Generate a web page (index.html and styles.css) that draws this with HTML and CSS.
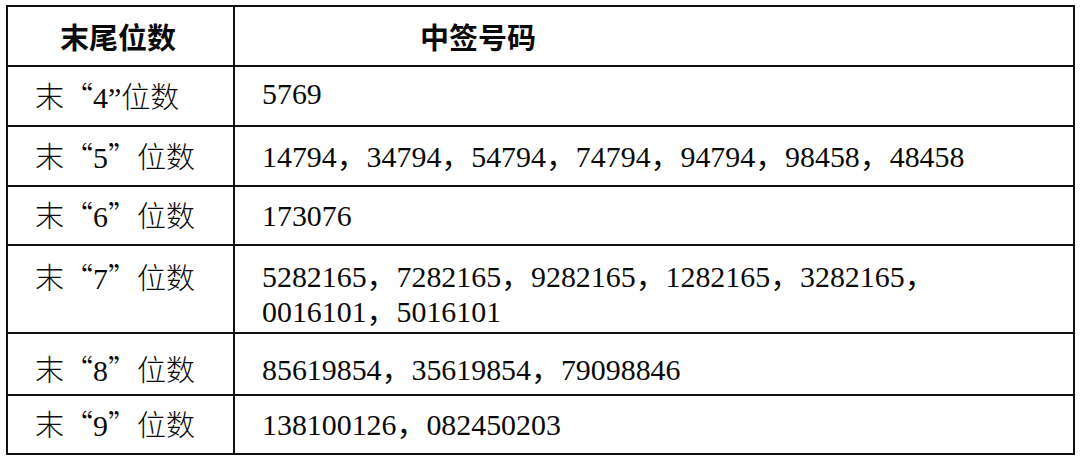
FILE: index.html
```html
<!DOCTYPE html>
<html lang="zh-CN">
<head>
<meta charset="utf-8">
<title>中签号码</title>
<link rel="stylesheet" href="styles.css">
</head>
<body>
<table class="lottery">
  <colgroup>
    <col class="col-tail">
    <col class="col-nums">
  </colgroup>
  <thead>
    <tr class="row-head">
      <th class="h-tail">末尾位数</th>
      <th class="h-nums">中签号码</th>
    </tr>
  </thead>
  <tbody>
    <tr class="row-1">
      <td class="tail">末“<span class="d">4”</span>位数</td>
      <td class="nums">5769</td>
    </tr>
    <tr class="row-2">
      <td class="tail">末“<span class="d">5</span>”位数</td>
      <td class="nums">14794，34794，54794，74794，94794，98458，48458</td>
    </tr>
    <tr class="row-3">
      <td class="tail">末“<span class="d">6</span>”位数</td>
      <td class="nums">173076</td>
    </tr>
    <tr class="row-4">
      <td class="tail tail-top">末“<span class="d">7</span>”位数</td>
      <td class="nums">5282165，7282165，9282165，1282165，3282165，<br>0016101，5016101</td>
    </tr>
    <tr class="row-5">
      <td class="tail">末“<span class="d">8</span>”位数</td>
      <td class="nums">85619854，35619854，79098846</td>
    </tr>
    <tr class="row-6">
      <td class="tail">末“<span class="d">9</span>”位数</td>
      <td class="nums">138100126，082450203</td>
    </tr>
  </tbody>
</table>
</body>
</html>
```

FILE: styles.css
```css
html, body {
  margin: 0;
  padding: 0;
  background: #ffffff;
}

body {
  padding: 5px 0 0 6px;
  color: #0a0a0a;
}

.lottery {
  border-collapse: collapse;
  table-layout: fixed;
  width: 1067px;
  border: 2px solid #111111;
}

.col-tail { width: 227px; }
.col-nums { width: 840px; }

.lottery th,
.lottery td {
  border: 2px solid #111111;
  white-space: nowrap;
}

.lottery th {
  font-family: "Noto Sans CJK SC", "Noto Sans", sans-serif;
  font-weight: 700;
  font-size: 29px;
  line-height: 35px;
  text-align: left;
  vertical-align: middle;
  padding-top: 0;
  padding-bottom: 0;
}

.lottery .h-tail { padding-left: 52px; }
.lottery .h-nums { padding-left: 185px; }

.row-head { height: 60px; }
.row-1 { height: 60px; }
.row-2 { height: 60px; }
.row-3 { height: 59px; }
.row-4 { height: 88px; }
.row-5 { height: 62px; }
.row-6 { height: 59px; }

.lottery .tail {
  font-family: "Noto Sans CJK SC", sans-serif;
  font-weight: 300;
  font-size: 29px;
  line-height: 35px;
  padding: 0 0 0 27px;
  vertical-align: middle;
}

.lottery .tail .d {
  font-family: "Liberation Serif", "Times New Roman", serif;
  font-size: 29.9px;
}

.lottery .tail-top {
  vertical-align: top;
  padding-top: 13px;
}

.lottery .nums {
  font-family: "Liberation Serif", "Times New Roman", "Noto Sans CJK SC", serif;
  font-size: 29.9px;
  line-height: 35px;
  padding: 0 0 0 27px;
  vertical-align: middle;
}

.lottery .row-1 .nums { padding-bottom: 6px; }
.lottery .row-4 .nums { padding-top: 9px; }
.lottery .row-5 td { padding-top: 10px; }
```
